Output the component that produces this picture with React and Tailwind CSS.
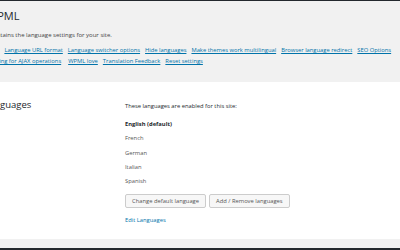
export default function App() {
  const row1 = ["Site Languages", "Language URL format", "Language switcher options", "Hide languages", "Make themes work multilingual", "Browser language redirect", "SEO Options"];
  const row2 = ["Language filtering for AJAX operations", "WPML love", "Translation Feedback", "Reset settings"];
  const langs = ["French", "German", "Italian", "Spanish"];
  return (
    <div className="w-[400px] h-[250px] overflow-hidden bg-[#f1f1f1] flex flex-col" style={{ fontFamily: '"Open Sans", "Noto Sans", sans-serif' }}>
      <div className="h-[1px] bg-[#23282d] shrink-0" />
      <div className="h-[81px] shrink-0 overflow-hidden">
        <h1 className="mt-[7.5px] ml-[-13px] text-[11px] leading-[14px] text-[#23282d] whitespace-nowrap">WPML</h1>
        <p className="mt-[7px] ml-[-43px] text-[6px] leading-[10px] text-[#444] whitespace-nowrap">This screen contains the language settings for your site.</p>
        <div className="mt-[5.5px] ml-[-41px] flex gap-[5px] whitespace-nowrap text-[5.8px] leading-[11px]">
          {row1.map((t) => (
            <a key={t} className="text-[#0073aa] underline">{t}</a>
          ))}
        </div>
        <div className="ml-[-41px] flex whitespace-nowrap text-[5.8px] leading-[11px]">
          <a className="text-[#0073aa] underline">{row2[0]}</a>
          <div className="ml-[7px] flex gap-[5px]">
            {row2.slice(1).map((t) => (
              <a key={t} className="text-[#0073aa] underline">{t}</a>
            ))}
          </div>
        </div>
      </div>
      <div className="h-[157px] shrink-0 bg-white flex">
        <div className="w-[125px] shrink-0 overflow-hidden">
          <h2 className="mt-[16px] ml-[-16px] text-[9.5px] leading-[14px] text-[#23282d] whitespace-nowrap">Languages</h2>
        </div>
        <div className="flex flex-col">
          <p className="mt-[18.5px] text-[5.8px] leading-[10px] text-[#23282d] font-medium whitespace-nowrap">These languages are enabled for this site:</p>
          <p className="mt-[8.5px] text-[5.8px] leading-[10px] text-[#23282d] font-bold">English (default)</p>
          {langs.map((l) => (
            <p key={l} className="mt-[4.3px] text-[5.8px] leading-[10px] text-[#555]">{l}</p>
          ))}
          <div className="mt-[8px] flex gap-[3px]">
            <button className="h-[14px] px-[6px] text-[5.8px] text-[#555] bg-[#f7f7f7] border border-[#ccc] rounded-[2px] whitespace-nowrap">Change default language</button>
            <button className="h-[14px] px-[6px] text-[5.8px] text-[#555] bg-[#f7f7f7] border border-[#ccc] rounded-[2px] whitespace-nowrap">Add / Remove languages</button>
          </div>
          <a className="mt-[6.5px] text-[5.8px] leading-[10px] text-[#0073aa]">Edit Languages</a>
        </div>
      </div>
      <div className="flex-1" />
      <div className="h-[2px] bg-[#23282d] shrink-0" />
    </div>
  );
}
